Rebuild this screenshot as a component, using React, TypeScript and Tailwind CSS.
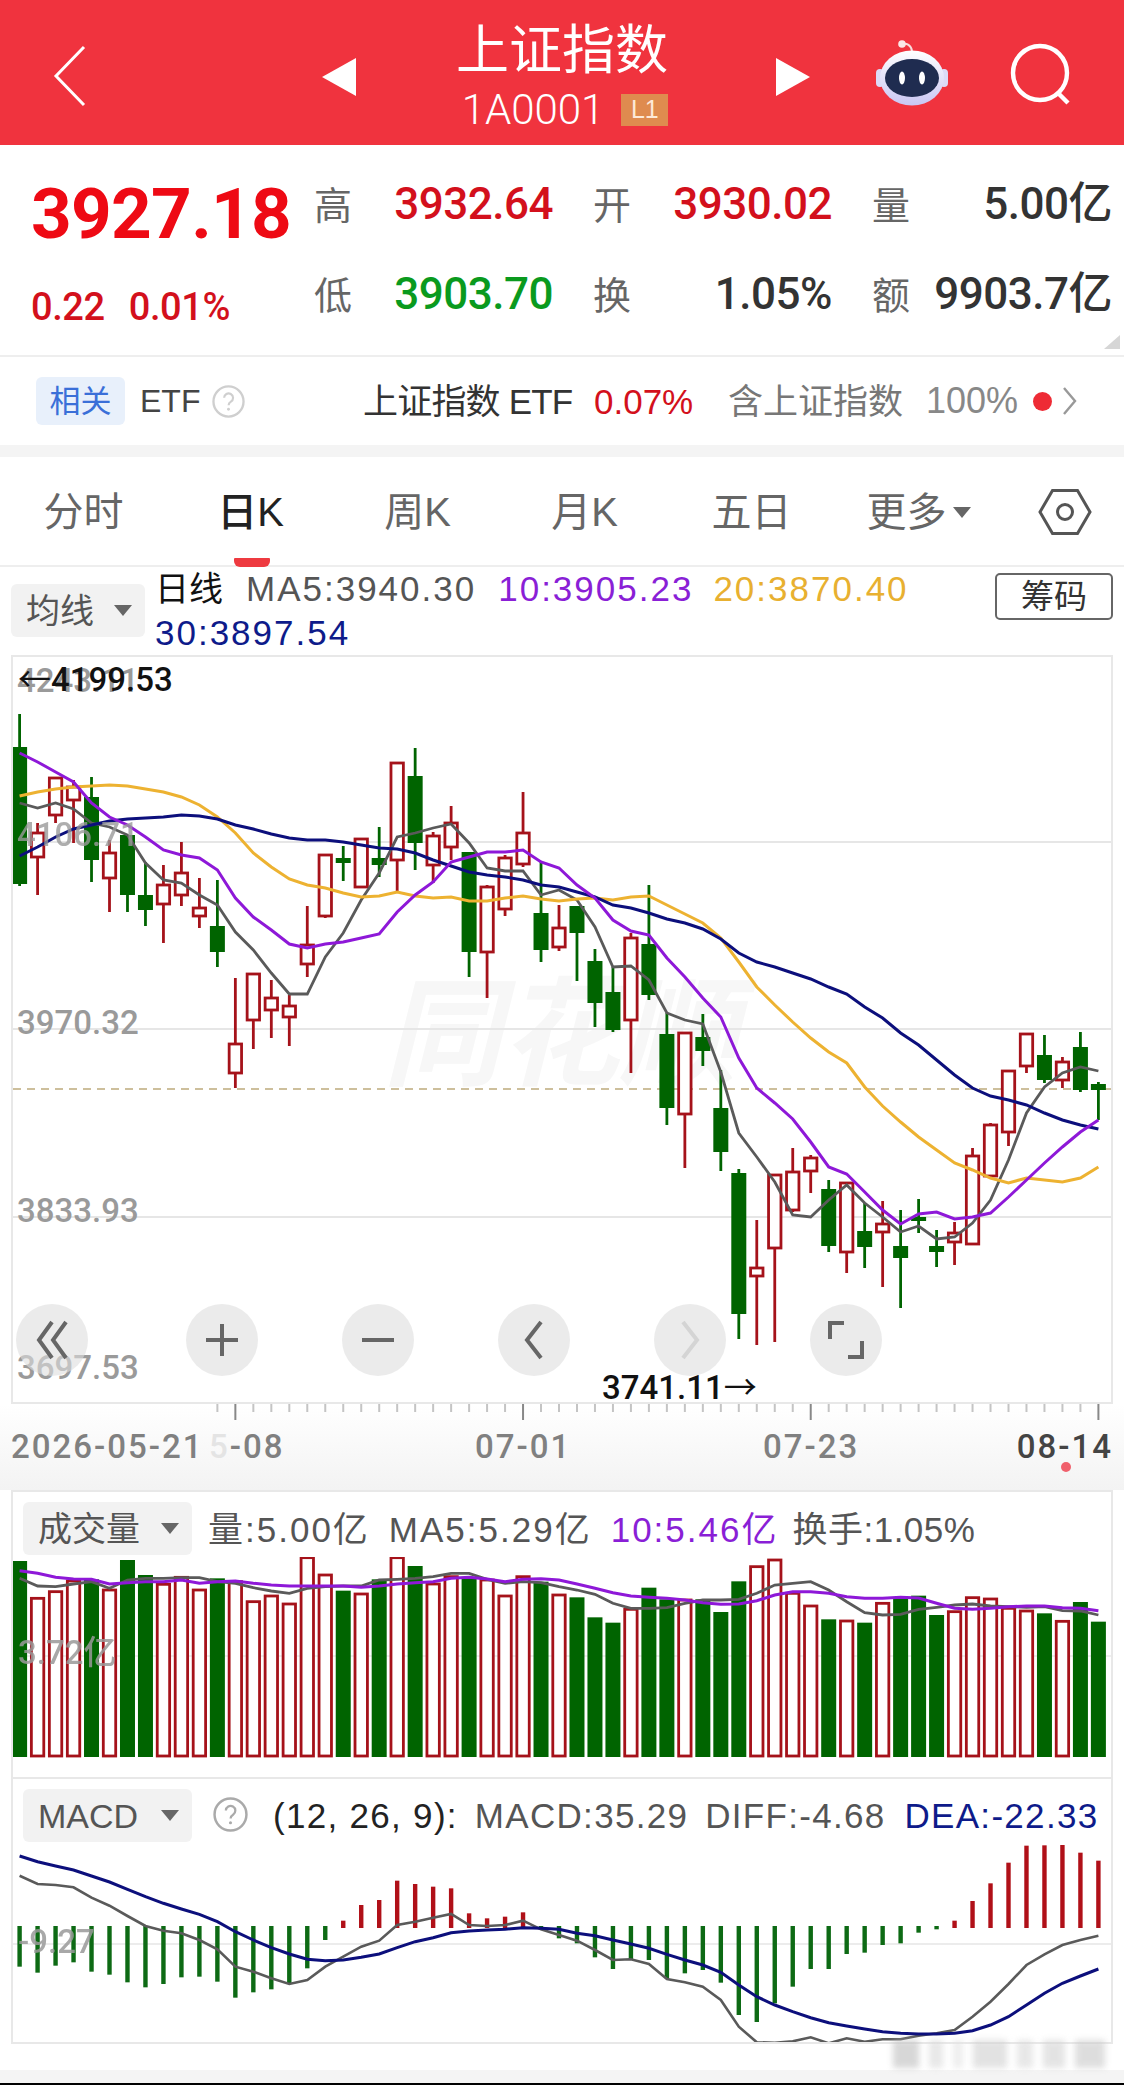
const SANS = "font-['Liberation_Sans','Noto_Sans_CJK_SC',sans-serif]";

const RED = "#a5121a";
const GREEN = "#006400";
const xAt = (i: number) => 19.6 + 17.98 * i;

// [high, bodyTop, bodyBottom, low, up]
const candles: [number, number, number, number, number][] = [
  [714, 747, 884, 886, 0], [823, 833, 857, 895, 1], [778, 778, 815, 823, 1], [780, 787, 800, 843, 1],
  [777, 797, 860, 882, 0], [840, 853, 878, 912, 1], [835, 835, 895, 912, 0], [862, 895, 910, 926, 0],
  [865, 885, 904, 943, 1], [842, 873, 895, 906, 1], [878, 908, 916, 928, 1], [880, 926, 952, 967, 0],
  [978, 1044, 1073, 1088, 1], [974, 974, 1020, 1049, 1], [980, 998, 1010, 1038, 1], [995, 1006, 1017, 1046, 1],
  [906, 945, 964, 977, 1], [855, 855, 916, 918, 1], [846, 858, 863, 881, 0], [838, 839, 887, 888, 1],
  [827, 858, 865, 877, 0], [762, 763, 860, 892, 1], [748, 776, 843, 870, 0], [832, 836, 865, 883, 1],
  [806, 823, 847, 860, 1], [852, 852, 952, 977, 0], [885, 887, 952, 998, 1], [855, 858, 909, 916, 1],
  [792, 833, 864, 867, 1], [862, 913, 950, 962, 0], [905, 928, 947, 951, 1], [906, 906, 933, 981, 0],
  [949, 961, 1003, 1027, 0], [967, 992, 1030, 1032, 0], [933, 938, 1020, 1073, 1], [885, 944, 995, 1000, 0],
  [1013, 1034, 1108, 1125, 0], [1032, 1033, 1114, 1168, 1], [1014, 1037, 1051, 1066, 0], [1070, 1108, 1152, 1171, 0],
  [1169, 1173, 1314, 1339, 0], [1220, 1268, 1276, 1345, 1], [1175, 1175, 1248, 1342, 1], [1148, 1172, 1210, 1212, 1],
  [1155, 1158, 1171, 1193, 1], [1180, 1189, 1246, 1252, 0], [1183, 1183, 1252, 1273, 1], [1203, 1231, 1247, 1268, 0],
  [1201, 1224, 1232, 1287, 1], [1210, 1246, 1258, 1308, 0], [1199, 1217, 1221, 1233, 0], [1230, 1246, 1252, 1267, 0],
  [1222, 1233, 1242, 1265, 1], [1148, 1156, 1244, 1245, 1], [1123, 1125, 1176, 1177, 1], [1070, 1071, 1132, 1146, 1],
  [1033, 1034, 1066, 1073, 1], [1035, 1055, 1080, 1083, 0], [1057, 1062, 1080, 1088, 1], [1032, 1047, 1090, 1092, 0],
  [1082, 1084, 1090, 1120, 0],
];

const ma5 = [803, 808, 803, 809, 823, 827, 835, 863, 880, 883, 895, 905, 932, 950, 973, 994, 994, 957, 933, 900, 873, 837, 833, 828, 824, 843, 868, 871, 871, 895, 890, 900, 927, 967, 966, 980, 1013, 1020, 1024, 1072, 1133, 1157, 1182, 1215, 1217, 1200, 1185, 1203, 1217, 1232, 1226, 1239, 1237, 1223, 1200, 1160, 1113, 1087, 1073, 1067, 1071];
const ma10 = [753, 762, 772, 782, 803, 817, 825, 837, 850, 855, 858, 870, 898, 917, 930, 944, 948, 944, 942, 938, 934, 912, 895, 882, 862, 857, 852, 852, 850, 862, 868, 885, 898, 920, 931, 935, 958, 977, 998, 1017, 1058, 1088, 1103, 1119, 1142, 1167, 1174, 1192, 1210, 1224, 1214, 1212, 1219, 1217, 1213, 1197, 1180, 1163, 1147, 1132, 1120];
const ma20 = [796, 792, 789, 787, 786, 785, 786, 789, 792, 797, 805, 817, 833, 853, 867, 879, 885, 888, 893, 897, 896, 892, 896, 898, 897, 901, 901, 898, 896, 899, 901, 899, 898, 900, 897, 896, 905, 914, 923, 938, 962, 987, 1005, 1022, 1038, 1052, 1063, 1087, 1106, 1122, 1137, 1150, 1163, 1170, 1178, 1183, 1178, 1180, 1182, 1178, 1167];
const ma30 = [856, 847, 837, 829, 825, 821, 819, 818, 817, 815, 816, 819, 825, 829, 834, 838, 840, 840, 842, 845, 848, 849, 853, 860, 866, 872, 875, 877, 880, 885, 887, 892, 897, 905, 908, 913, 919, 923, 929, 939, 953, 962, 967, 973, 979, 987, 994, 1007, 1018, 1033, 1045, 1060, 1075, 1088, 1096, 1100, 1105, 1113, 1120, 1125, 1129];

// volume tops, in crop units: y = 1480 + n / 3
const volTops = [243, 355, 335, 303, 298, 330, 240, 285, 313, 292, 330, 295, 305, 365, 348, 372, 233, 285, 332, 342, 298, 233, 258, 312, 290, 295, 300, 348, 290, 305, 345, 352, 412, 428, 388, 323, 358, 360, 358, 396, 304, 260, 240, 340, 378, 418, 423, 428, 370, 355, 347, 405, 395, 353, 357, 385, 393, 400, 424, 366, 425];
const volMa5 = [295, 318, 320, 312, 305, 325, 300, 295, 295, 293, 293, 305, 310, 323, 333, 340, 325, 320, 318, 318, 300, 298, 295, 290, 280, 280, 298, 310, 305, 308, 320, 330, 343, 370, 385, 385, 383, 370, 360, 360, 358, 340, 315, 310, 305, 330, 365, 398, 405, 403, 388, 382, 375, 372, 378, 380, 382, 380, 392, 393, 405];
const volMa10 = [272, 280, 292, 297, 298, 312, 308, 305, 305, 300, 310, 305, 303, 310, 315, 318, 318, 318, 318, 322, 318, 312, 308, 305, 295, 292, 297, 305, 298, 296, 300, 312, 325, 338, 348, 352, 355, 360, 368, 373, 372, 362, 345, 335, 335, 340, 350, 355, 355, 352, 354, 370, 385, 388, 385, 380, 378, 378, 383, 385, 392];

// macd, crop units: y = 1770 + n / 3
const macdEnds = [590, 608, 587, 577, 605, 614, 637, 652, 642, 622, 620, 635, 683, 667, 658, 640, 595, 510, 452, 405, 390, 332, 342, 350, 355, 430, 445, 440, 427, 478, 505, 520, 562, 597, 568, 570, 625, 610, 600, 638, 735, 756, 700, 650, 597, 597, 552, 548, 525, 520, 488, 478, 452, 393, 340, 278, 227, 226, 225, 248, 272];
const diff = [317, 342, 345, 352, 383, 407, 438, 468, 482, 490, 510, 538, 590, 605, 625, 642, 630, 590, 560, 530, 512, 465, 455, 443, 432, 465, 468, 465, 452, 478, 495, 512, 540, 570, 568, 582, 627, 637, 650, 690, 770, 817, 818, 814, 802, 820, 805, 815, 808, 808, 797, 790, 780, 740, 695, 642, 585, 553, 525, 510, 497];
const dea = [258, 275, 288, 300, 318, 336, 358, 380, 400, 417, 433, 455, 485, 510, 533, 552, 568, 572, 570, 562, 552, 533, 515, 503, 488, 483, 480, 478, 473, 475, 478, 490, 497, 510, 522, 535, 553, 570, 585, 607, 645, 680, 705, 725, 743, 758, 768, 777, 785, 790, 792, 792, 790, 782, 765, 740, 705, 670, 640, 618, 597];

const line = (ys: number[], map: (n: number) => number = (n) => n) =>
  ys.map((y, i) => `${xAt(i).toFixed(1)},${map(y).toFixed(1)}`).join(" ");

const volY = (n: number) => 1480 + n / 3;
const macdY = (n: number) => 1770 + n / 3;

function Caret({ className = "" }: { className?: string }) {
  return (
    <svg width="18" height="11" viewBox="0 0 18 11" className={className}>
      <path d="M0 0h18L9 11z" fill="#666" />
    </svg>
  );
}

function Chip({ label, w }: { label: string; w: string }) {
  return (
    <div className={`${w} h-[53px] rounded-[6px] bg-[#f2f2f2] flex items-center justify-between pl-[15px] pr-[13px] text-[34px] text-[#555] shrink-0`}>
      <span className="leading-none">{label}</span>
      <Caret />
    </div>
  );
}

function Help({ size, color }: { size: number; color: string }) {
  return (
    <svg width={size} height={size} viewBox="0 0 34 34" className="shrink-0">
      <circle cx="17" cy="17" r="15.5" fill="none" stroke={color} strokeWidth="2.4" />
      <path d="M12.5 13.2a4.6 4.6 0 1 1 7 4c-1.6 1-2.4 1.8-2.4 3.6" fill="none" stroke={color} strokeWidth="2.2" />
      <circle cx="17" cy="25" r="1.5" fill={color} />
    </svg>
  );
}

function Stat({ label, value, tone }: { label: string; value: string; tone: string }) {
  return (
    <div className="flex items-center justify-between h-[90px]">
      <span className="text-[38px] text-[#666] leading-none mt-[2px]">{label}</span>
      <span className={`font-['Roboto','Noto_Sans_CJK_SC',sans-serif] font-medium text-[44px] tracking-[-0.5px] leading-none mt-[-3px] ${tone}`}>{value}</span>
    </div>
  );
}

function ZoomButtons() {
  const round = "w-[72px] h-[72px] rounded-full bg-[#dedede]/60 flex items-center justify-center";
  const icon = "fill-none stroke-[#666] stroke-[4]";
  return (
    <div className="absolute left-[3px] top-[647px] flex gap-[84px]">
      <div className={`${round} mr-[14px]`}>
        <svg width="36" height="40" viewBox="0 0 36 40" className={icon}><path d="M18 2 5 20l13 18M32 2 19 20l13 18" /></svg>
      </div>
      <div className={round}>
        <svg width="36" height="36" viewBox="0 0 36 36" className={icon}><path d="M18 2v32M2 18h32" /></svg>
      </div>
      <div className={round}>
        <svg width="36" height="6" viewBox="0 0 36 6" className={icon}><path d="M2 3h32" /></svg>
      </div>
      <div className={round}>
        <svg width="22" height="40" viewBox="0 0 22 40" className={icon}><path d="M18 2 4 20l14 18" /></svg>
      </div>
      <div className={round}>
        <svg width="22" height="40" viewBox="0 0 22 40" className="fill-none stroke-[#d4d4d4] stroke-[4]"><path d="m4 2 14 18L4 38" /></svg>
      </div>
      <div className={round}>
        <svg width="38" height="38" viewBox="0 0 38 38" className={icon}><path d="M17 2H3v16M21 36h14V20" /></svg>
      </div>
    </div>
  );
}

const axisLabel = "absolute top-[26px] text-[33px] leading-none font-['Roboto',sans-serif] font-medium tracking-[2px] whitespace-nowrap";
const priceLabel = "absolute left-[4px] text-[33px] leading-none font-['Roboto',sans-serif] font-medium text-[#9a9a9a]";
const pointLabel = "absolute text-[33px] leading-none text-[#111] font-['Roboto',sans-serif] font-medium whitespace-nowrap";
const arrow = "font-['Noto_Sans_CJK_SC',sans-serif] font-normal text-[33px]";

export default function App() {
  return (
    <div className={`w-[1124px] h-[2085px] bg-white overflow-hidden flex flex-col ${SANS}`}>
      {/* Title bar */}
      <header className="relative h-[145px] shrink-0 bg-[#f0333e] text-white flex items-center">
        <svg width="34" height="62" viewBox="0 0 34 62" className="ml-[53px] mt-[7px] shrink-0">
          <path d="M31 2 3 31l28 29" fill="none" stroke="#fff" strokeWidth="3" />
        </svg>
        <svg width="34" height="38" viewBox="0 0 34 38" className="ml-[235px] mt-[9px] shrink-0">
          <path d="M34 0v38L0 19z" fill="#fff" />
        </svg>
        <div className="w-[420px] shrink-0 flex flex-col items-center pr-[8px]">
          <div className="text-[53px] leading-[62px] mt-[0px]">上证指数</div>
          <div className="flex items-center gap-[17px] mt-[12px] ml-[6px] h-[32px]">
            <span className="text-[42px] leading-none font-['Roboto',sans-serif] font-light">1A0001</span>
            <span className="w-[47px] h-[32px] bg-[#df8b4f] text-[#fde9d8] text-[25px] flex items-center justify-center leading-none">L1</span>
          </div>
        </div>
        <svg width="34" height="38" viewBox="0 0 34 38" className="mt-[9px] shrink-0">
          <path d="M0 0v38l34-19z" fill="#fff" />
        </svg>
        <svg width="74" height="68" viewBox="875 42 74 68" className="ml-[65px] shrink-0">
          <defs>
            <linearGradient id="shell" x1="0" y1="0" x2="0" y2="1">
              <stop offset="0" stopColor="#ffffff" />
              <stop offset="1" stopColor="#c9c6f3" />
            </linearGradient>
          </defs>
          <path d="M902 47c5-1 9 1 10 7" fill="none" stroke="#f8dcdc" strokeWidth="2" />
          <circle cx="902" cy="47" r="3.8" fill="#fbe7e7" />
          <rect x="876" y="72" width="8" height="18" rx="4" fill="#dcdaf7" />
          <rect x="940" y="72" width="8" height="18" rx="4" fill="#dcdaf7" />
          <ellipse cx="912" cy="81" rx="32" ry="27.5" fill="url(#shell)" />
          <ellipse cx="912" cy="81" rx="27" ry="19" fill="#1f2c50" />
          <ellipse cx="902" cy="81" rx="3" ry="6.5" fill="#fff" />
          <ellipse cx="922" cy="81" rx="3" ry="6.5" fill="#fff" />
        </svg>
        <svg width="64" height="68" viewBox="1009 42 64 68" className="ml-[60px] shrink-0">
          <circle cx="1040" cy="76" r="27" fill="none" stroke="#fff" strokeWidth="4.4" />
          <path d="m1058 96 10 10" stroke="#fff" strokeWidth="4.4" fill="none" />
        </svg>
      </header>

      {/* Quote summary */}
      <section className="relative h-[212px] shrink-0 border-b-2 border-[#eeeeee] flex">
        <div className="w-[314px] shrink-0 pl-[31px]">
          <div className="h-[134px] flex items-center pt-[2px]">
            <span className="font-['Roboto',sans-serif] font-bold text-[71px] tracking-[-0.7px] leading-none text-[#ee0a14]">3927.18</span>
          </div>
          <div className="flex gap-[24px] text-[38px] leading-none text-[#d3101c] font-['Roboto',sans-serif] font-medium mt-[9px] tracking-[-0.4px]">
            <span>0.22</span>
            <span>0.01%</span>
          </div>
        </div>
        <div className="grid grid-cols-[239px_239px_240px] gap-x-[40px] pt-[15px] h-fit">
          <Stat label="高" value="3932.64" tone="text-[#d3101c]" />
          <Stat label="开" value="3930.02" tone="text-[#d3101c]" />
          <Stat label="量" value="5.00亿" tone="text-[#333]" />
          <Stat label="低" value="3903.70" tone="text-[#0a9a1e]" />
          <Stat label="换" value="1.05%" tone="text-[#333]" />
          <Stat label="额" value="9903.7亿" tone="text-[#333]" />
        </div>
        <svg width="16" height="14" viewBox="0 0 16 14" className="absolute right-[4px] bottom-[6px]">
          <path d="M16 0v14H0z" fill="#d6d6d6" />
        </svg>
      </section>

      {/* Related ETF row */}
      <section className="h-[88px] shrink-0 flex items-center pl-[36px] text-[35px] leading-none whitespace-nowrap">
        <span className="w-[89px] h-[48px] rounded-[6px] bg-[#e8f0fb] text-[#3a6fd8] text-[31px] flex items-center justify-center shrink-0">相关</span>
        <span className="ml-[15px] text-[#444] text-[32px] w-[61px]">ETF</span>
        <span className="ml-[11px]"><Help size={33} color="#cfcfcf" /></span>
        <span className="ml-[118px] text-[#333] w-[209px] tracking-[-0.8px]">上证指数 ETF</span>
        <span className="ml-[22px] text-[#d3101c] text-[35px] w-[116px]">0.07%</span>
        <span className="ml-[18px] text-[#777] w-[178px]">含上证指数</span>
        <span className="ml-[20px] text-[#888] text-[36px] w-[92px]">100%</span>
        <span className="ml-[15px] w-[19px] h-[19px] rounded-full bg-[#ee2b35]" />
        <svg width="16" height="30" viewBox="0 0 16 30" className="ml-[10px]">
          <path d="m2 2 11 13L2 28" fill="none" stroke="#999" strokeWidth="2.4" />
        </svg>
      </section>
      <div className="h-[12px] shrink-0 bg-[#f4f4f4]" />

      {/* Period tabs */}
      <nav className="relative h-[110px] shrink-0 border-b-2 border-[#eeeeee] flex items-center pt-[2px] text-[40px] text-[#666] leading-none">
        <span className="w-[167px] text-center">分时</span>
        <span className="w-[167px] text-center text-[#222] font-medium">日K</span>
        <span className="w-[167px] text-center">周K</span>
        <span className="w-[167px] text-center">月K</span>
        <span className="w-[167px] text-center">五日</span>
        <span className="w-[167px] flex items-center justify-center gap-[6px]">更多<Caret /></span>
        <svg width="54" height="48" viewBox="0 0 54 48" className="ml-[36px]">
          <path d="M14.500 2.500h25L52 24 39.500 45.500h-25L2 24z" fill="none" stroke="#555" strokeWidth="3" />
          <circle cx="27" cy="24" r="7.500" fill="none" stroke="#555" strokeWidth="3" />
        </svg>
        <span className="absolute left-[234px] bottom-[-2px] w-[36px] h-[9px] rounded-t-[1px] rounded-b-[6px] bg-[#ee3a40]" />
      </nav>

      {/* Moving average legend */}
      <section className="relative h-[88px] shrink-0 flex pl-[11px] pt-[17px]">
        <Chip label="均线" w="w-[134px]" />
        <div className="ml-[10px] mt-[-17px] w-[800px] flex flex-wrap items-center text-[35px] leading-[42px] tracking-[2px] text-[#555]">
          <span className="text-[34px] text-[#111] tracking-normal">日线</span>
          <span className="ml-[23px]">MA5:3940.30</span>
          <span className="ml-[22px] text-[#8a1fd6]">10:3905.23</span>
          <span className="ml-[20px] text-[#e8b030]">20:3870.40</span>
          <span className="w-full text-[#0e1b8a]">30:3897.54</span>
        </div>
        <span className="absolute right-[11px] top-[6px] w-[118px] h-[47px] border-2 border-[#666] rounded-[5px] text-[33px] leading-none text-[#333] flex items-center justify-center">筹码</span>
      </section>

      {/* Candlestick chart */}
      <section className="relative h-[749px] shrink-0 mx-[11px] border-2 border-[#e8e8e8]">
        <div className="absolute left-[370px] top-[309px] text-[118px] leading-none italic font-bold text-[#f7f7f7] font-['Noto_Sans_CJK_SC',sans-serif] whitespace-nowrap">同花顺</div>
        <svg width="1098" height="745" viewBox="13 657 1098 745" className="block relative">
          <path d="M13 842h1098M13 1029h1098M13 1217h1098" stroke="#e6e6e6" strokeWidth="2" fill="none" />
          <path d="M13 1089h1098" stroke="#cdbf9c" strokeWidth="2" strokeDasharray="8 6" fill="none" />
          {candles.map(([high, top, bottom, low, up], i) => {
            const x = xAt(i);
            const color = up ? RED : GREEN;
            return (
              <g key={i}>
                <path d={`M${x} ${high}V${low}`} stroke={color} strokeWidth="2.8" />
                {up ? (
                  <rect x={x - 6.2} y={top} width="12.4" height={bottom - top} fill="#fff" stroke={color} strokeWidth="2.8" />
                ) : (
                  <rect x={x - 7.5} y={top} width="15" height={bottom - top} fill={color} />
                )}
              </g>
            );
          })}
          <polyline points={line(ma5)} fill="none" stroke="#5a5a5a" strokeWidth="2.8" />
          <polyline points={line(ma20)} fill="none" stroke="#edb231" strokeWidth="3" />
          <polyline points={line(ma30)} fill="none" stroke="#0c0f7c" strokeWidth="3" />
          <polyline points={line(ma10)} fill="none" stroke="#8e18d8" strokeWidth="3" />
        </svg>

        <span className={`${priceLabel} top-[7px]`}>4243.11</span>
        <span className={`${pointLabel} left-[5px] top-[4px]`}><span className={arrow}>←</span>4199.53</span>
        <span className={`${priceLabel} top-[161px] opacity-80`}>4106.71</span>
        <span className={`${priceLabel} top-[349px]`}>3970.32</span>
        <span className={`${priceLabel} top-[537px]`}>3833.93</span>
        <span className={`${priceLabel} top-[694px]`}>3697.53</span>
        <span className={`${pointLabel} left-[589px] top-[712px]`}>3741.11<span className={arrow}>→</span></span>
        <ZoomButtons />
      </section>

      {/* Time axis */}
      <section className="relative h-[86px] shrink-0 bg-gradient-to-b from-white to-[#f3f3f3]">
        <svg width="1124" height="18" viewBox="0 1404 1124 18" className="block">
          {candles.map((_, i) =>
            i < 11 ? null : (
              <path
                key={i}
                d={`M${xAt(i)} 1404V${i % 16 === 12 ? 1420 : 1412}`}
                stroke={i % 16 === 12 ? "#888" : "#c4c4c4"}
                strokeWidth="2"
              />
            ),
          )}
        </svg>
        <span className={`${axisLabel} left-[11px] text-[#808080]`}>2026-05-21</span>
        <span className={`${axisLabel} left-[209px] text-[#808080]`}><span className="text-[#e4e4e4]">5</span>-08</span>
        <span className={`${axisLabel} left-[475px] text-[#808080]`}>07-01</span>
        <span className={`${axisLabel} left-[763px] text-[#808080]`}>07-23</span>
        <span className={`${axisLabel} right-[11px] text-[#444]`}>08-14</span>
        <span className="absolute left-[1061px] top-[58px] w-[10px] h-[10px] rounded-full bg-[#f0606c]" />
      </section>

      {/* Volume */}
      <section className="relative h-[287px] shrink-0 mx-[11px] border-t-2 border-x-2 border-[#e8e8e8]">
        <div className="h-[65px] flex items-start pl-[10px] pt-[10px]">
          <Chip label="成交量" w="w-[169px]" />
          <div className="ml-[16px] pt-[10px] flex text-[35px] leading-none tracking-[2px] text-[#555] whitespace-nowrap">
            <span>量:5.00亿</span>
            <span className="ml-[19px]">MA5:5.29亿</span>
            <span className="ml-[19px] text-[#8a1fd6]">10:5.46亿</span>
            <span className="ml-[14px] tracking-[0.5px]">换手:1.05%</span>
          </div>
        </div>
        <svg width="1098" height="220" viewBox="13 1557 1098 220" className="block">
          <path d="M13 1656h1098" stroke="#eaeaea" strokeWidth="1.500" fill="none" />
          {volTops.map((n, i) => {
            const x = xAt(i);
            const y = volY(n);
            return candles[i][4] ? (
              <rect key={i} x={x - 6.2} y={y} width="12.4" height={1756 - y} fill="#fff" stroke={RED} strokeWidth="2.8" />
            ) : (
              <rect key={i} x={x - 7.5} y={y} width="15" height={1757 - y} fill={GREEN} />
            );
          })}
          <polyline points={line(volMa5, volY)} fill="none" stroke="#5a5a5a" strokeWidth="2.8" />
          <polyline points={line(volMa10, volY)} fill="none" stroke="#8e18d8" strokeWidth="3" />
        </svg>
        <span className="absolute left-[5px] top-[144px] text-[33px] leading-none font-['Roboto','Noto_Sans_CJK_SC',sans-serif] font-medium text-[#9a9a9a] opacity-85 whitespace-nowrap">3.72亿</span>
      </section>

      {/* MACD */}
      <section className="relative h-[267px] shrink-0 mx-[11px] border-y-2 border-x-2 border-[#e8e8e8]">
        <div className="h-[66px] flex items-start pl-[10px] pt-[10px]">
          <Chip label="MACD" w="w-[169px]" />
          <span className="ml-[21px] mt-[8px]"><Help size={35} color="#aaaaaa" /></span>
          <div className="ml-[25px] pt-[9px] flex text-[35px] leading-none tracking-[1.3px] text-[#555] whitespace-nowrap">
            <span className="text-[#222]">(12, 26, 9):</span>
            <span className="ml-[17px]">MACD:35.29</span>
            <span className="ml-[17px]">DIFF:-4.68</span>
            <span className="ml-[19px] text-[#0e1b8a]">DEA:-22.33</span>
          </div>
        </div>
        <svg width="1098" height="197" viewBox="13 1845 1098 197" className="block">
          <path d="M13 1944h1098" stroke="#e6e6e6" strokeWidth="1.500" fill="none" />
          {macdEnds.map((n, i) => {
            const y = macdY(n);
            const up = y < 1927;
            return (
              <rect key={i} x={xAt(i) - 2.2} y={up ? y : 1926} width="4.400" height={up ? 1928 - y : y - 1926} fill={up ? "#b01018" : "#0d6a14"} />
            );
          })}
          <polyline points={line(diff, macdY)} fill="none" stroke="#5a5a5a" strokeWidth="2.6" />
          <polyline points={line(dea, macdY)} fill="none" stroke="#0c0f7c" strokeWidth="3" />
        </svg>
        <span className="absolute left-[5px] top-[146px] text-[33px] leading-none font-['Roboto',sans-serif] font-medium text-[#9a9a9a] opacity-85">-9.27</span>
      </section>

      <div className="relative flex-1 bg-white">
        <div className="absolute left-[893px] top-[-4px] w-[220px] h-[28px] flex gap-[10px] blur-[3px] opacity-60">
          <span className="w-[26px] h-full bg-[#bdbdbd]" />
          <span className="w-[14px] h-full bg-[#d8d8d8]" />
          <span className="w-[10px] h-full bg-[#e2e2e2]" />
          <span className="w-[34px] h-full bg-[#cfcfcf]" />
          <span className="w-[16px] h-full bg-[#d8d8d8]" />
          <span className="w-[22px] h-full bg-[#d2d2d2]" />
          <span className="w-[30px] h-full bg-[#c8c8c8]" />
        </div>
      </div>
      <div className="h-[13px] shrink-0 bg-[#f4f4f4]" />
      <div className="h-[2px] shrink-0 bg-black" />
    </div>
  );
}
